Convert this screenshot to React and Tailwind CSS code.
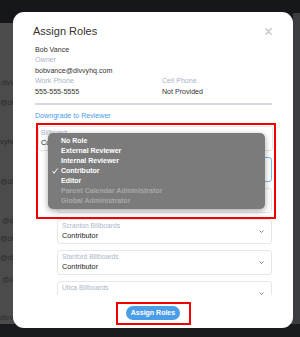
import React from "react";

const bgRows = [
    { text: "divvyhq.com", mt: "mt-[55px]", pl: "pl-[1px]" },
    { text: "@divvyhq.com", mt: "mt-[10px]", pl: "pl-0" },
    { text: "vyhq.com", mt: "mt-[29px]", pl: "pl-0" },
    { text: "@divvyhq.com", mt: "mt-[30px]", pl: "pl-0" },
    { text: "@divvyhq.com", mt: "mt-[29px]", pl: "pl-[2px]" },
    { text: "@divvyhq.com", mt: "mt-[8px]", pl: "pl-0" },
    { text: "@divvyhq.com", mt: "mt-[9px]", pl: "pl-0" },
    { text: "@divvyhq.com", mt: "mt-[12px]", pl: "pl-[2px]" },
    { text: "divvyhq.com", mt: "mt-[28px]", pl: "pl-0" },
];

const menuItems = [
    { label: "No Role" },
    { label: "External Reviewer" },
    { label: "Internal Reviewer" },
    { label: "Contributor", checked: true },
    { label: "Editor" },
    { label: "Parent Calendar Administrator", disabled: true },
    { label: "Global Administrator", disabled: true },
];

const cards = [
    { label: "Billboard", value: "Contributor", wide: true },
    { label: "Nashua Billboards", value: "Contributor", focused: true },
    { label: "Rochester Billboards", value: "Contributor" },
    { label: "Scranton Billboards", value: "Contributor" },
    { label: "Stanford Billboards", value: "Contributor" },
    { label: "Utica Billboards", value: "Contributor" },
];

function Chevron() {
    return (
        <svg width="5" height="3" viewBox="0 0 5 3" className="shrink-0">
            <path d="M0.5 0.5 L2.5 2.5 L4.5 0.5" fill="none" stroke="#777" strokeWidth="0.9" />
        </svg>
    );
}

function RoleCard({ label, value, wide, focused }) {
    return (
        <div
            className={
                "h-[25px] shrink-0 rounded-[3px] border flex items-center pr-[7px] " +
                (wide ? "ml-[25px] w-[235px] pl-[2px] " : "ml-[44px] w-[215px] pl-[4px] ") +
                (focused ? "border-[#7db6ec]" : "border-[#e3e6eb]")
            }
        >
            <div className="flex-1 self-start pt-[2px]">
                <div className="text-[6.7px] leading-[8px] text-[#a9b6c9]">{label}</div>
                <div className="mt-[1px] text-[7.3px] leading-[9px] text-[#222]">{value}</div>
            </div>
            <Chevron />
        </div>
    );
}

export default function App() {
    return (
        <div className="relative w-[300px] h-[337px] overflow-hidden bg-[#4b4b4c] font-['Liberation_Sans',Arial,sans-serif]">
            <div className="h-[23px] bg-[#16171b]"></div>
            <div className="flex flex-col text-[7.5px] leading-[10px] text-[#2b2b2c]">
                {bgRows.map((row, i) => (
                    <div key={i} className={row.mt + " " + row.pl + " whitespace-nowrap"}>
                        {row.text}
                    </div>
                ))}
            </div>
            <div className="absolute right-0 top-[13px] w-[7px] h-[311px] bg-[#3b3c3f]"></div>
            <div className="absolute left-0 bottom-0 w-full h-[13px] bg-[#1a1b1f]"></div>

            <div className="absolute left-[13px] top-[12px] w-[280px] h-[316px] rounded-[11px] bg-white">
                <div className="flex items-center justify-between pl-[20px] pr-[21px] pt-[12px]">
                    <div className="text-[11px] leading-[14px] text-[#333]">Assign Roles</div>
                    <svg width="7" height="7" viewBox="0 0 7 7">
                        <path d="M0.8 0.8 L6.2 6.2 M6.2 0.8 L0.8 6.2" stroke="#c8c8c8" strokeWidth="1.5" strokeLinecap="round" />
                    </svg>
                </div>

                <div className="mt-[6.7px] pl-[22px] pr-[21px] text-[7.1px] leading-[10.5px]">
                    <div className="text-[#333] font-medium">Bob Vance</div>
                    <div className="text-[#a7b4c7]">Owner</div>
                    <div className="text-[#333]">bobvance@divvyhq.com</div>
                    <div className="flex text-[#a7b4c7]">
                        <div className="w-[127px]">Work Phone</div>
                        <div>Cell Phone</div>
                    </div>
                    <div className="flex text-[#333]">
                        <div className="w-[127px]">555-555-5555</div>
                        <div>Not Provided</div>
                    </div>
                    <div className="mt-[6px] h-[2px] bg-[#d5dae1]"></div>
                    <div className="mt-[5.5px] text-[#4b9be6]">Downgrade to Reviewer</div>
                </div>

                <div className="mt-[4.75px] h-[169px] overflow-hidden flex flex-col gap-[6px]">
                    {cards.map((c, i) => (
                        <RoleCard key={i} {...c} />
                    ))}
                </div>

                <div className="mt-[11px] flex justify-center">
                    <button className="w-[54px] h-[14px] rounded-full bg-[#4c9de8] text-white text-[7px] font-bold leading-[14px]">
                        Assign Roles
                    </button>
                </div>

                <div className="absolute left-[35px] top-[121px] w-[217px] h-[76px] rounded-[5px] bg-[#7b7b7c] shadow-[0_2px_6px_rgba(0,0,0,0.35)] pt-[3px]">
                    {menuItems.map((item) => (
                        <div
                            key={item.label}
                            className={
                                "relative h-[10px] pl-[13px] text-[7px] font-bold leading-[10px] " +
                                (item.disabled ? "text-[#a8a8a8]" : "text-white")
                            }
                        >
                            {item.checked && (
                                <svg width="6" height="6" viewBox="0 0 6 6" className="absolute left-[4px] top-[2px]">
                                    <path d="M0.6 3.3 L2.1 5.3 L5.5 0.5" fill="none" stroke="white" strokeWidth="1" />
                                </svg>
                            )}
                            {item.label}
                        </div>
                    ))}
                </div>

                <div className="absolute left-[23px] top-[111px] w-[240px] h-[96px] border-2 border-[#f20000]"></div>
                <div className="absolute left-[103px] top-[290px] w-[75px] h-[23px] border-2 border-[#f20000]"></div>
            </div>
        </div>
    );
}
